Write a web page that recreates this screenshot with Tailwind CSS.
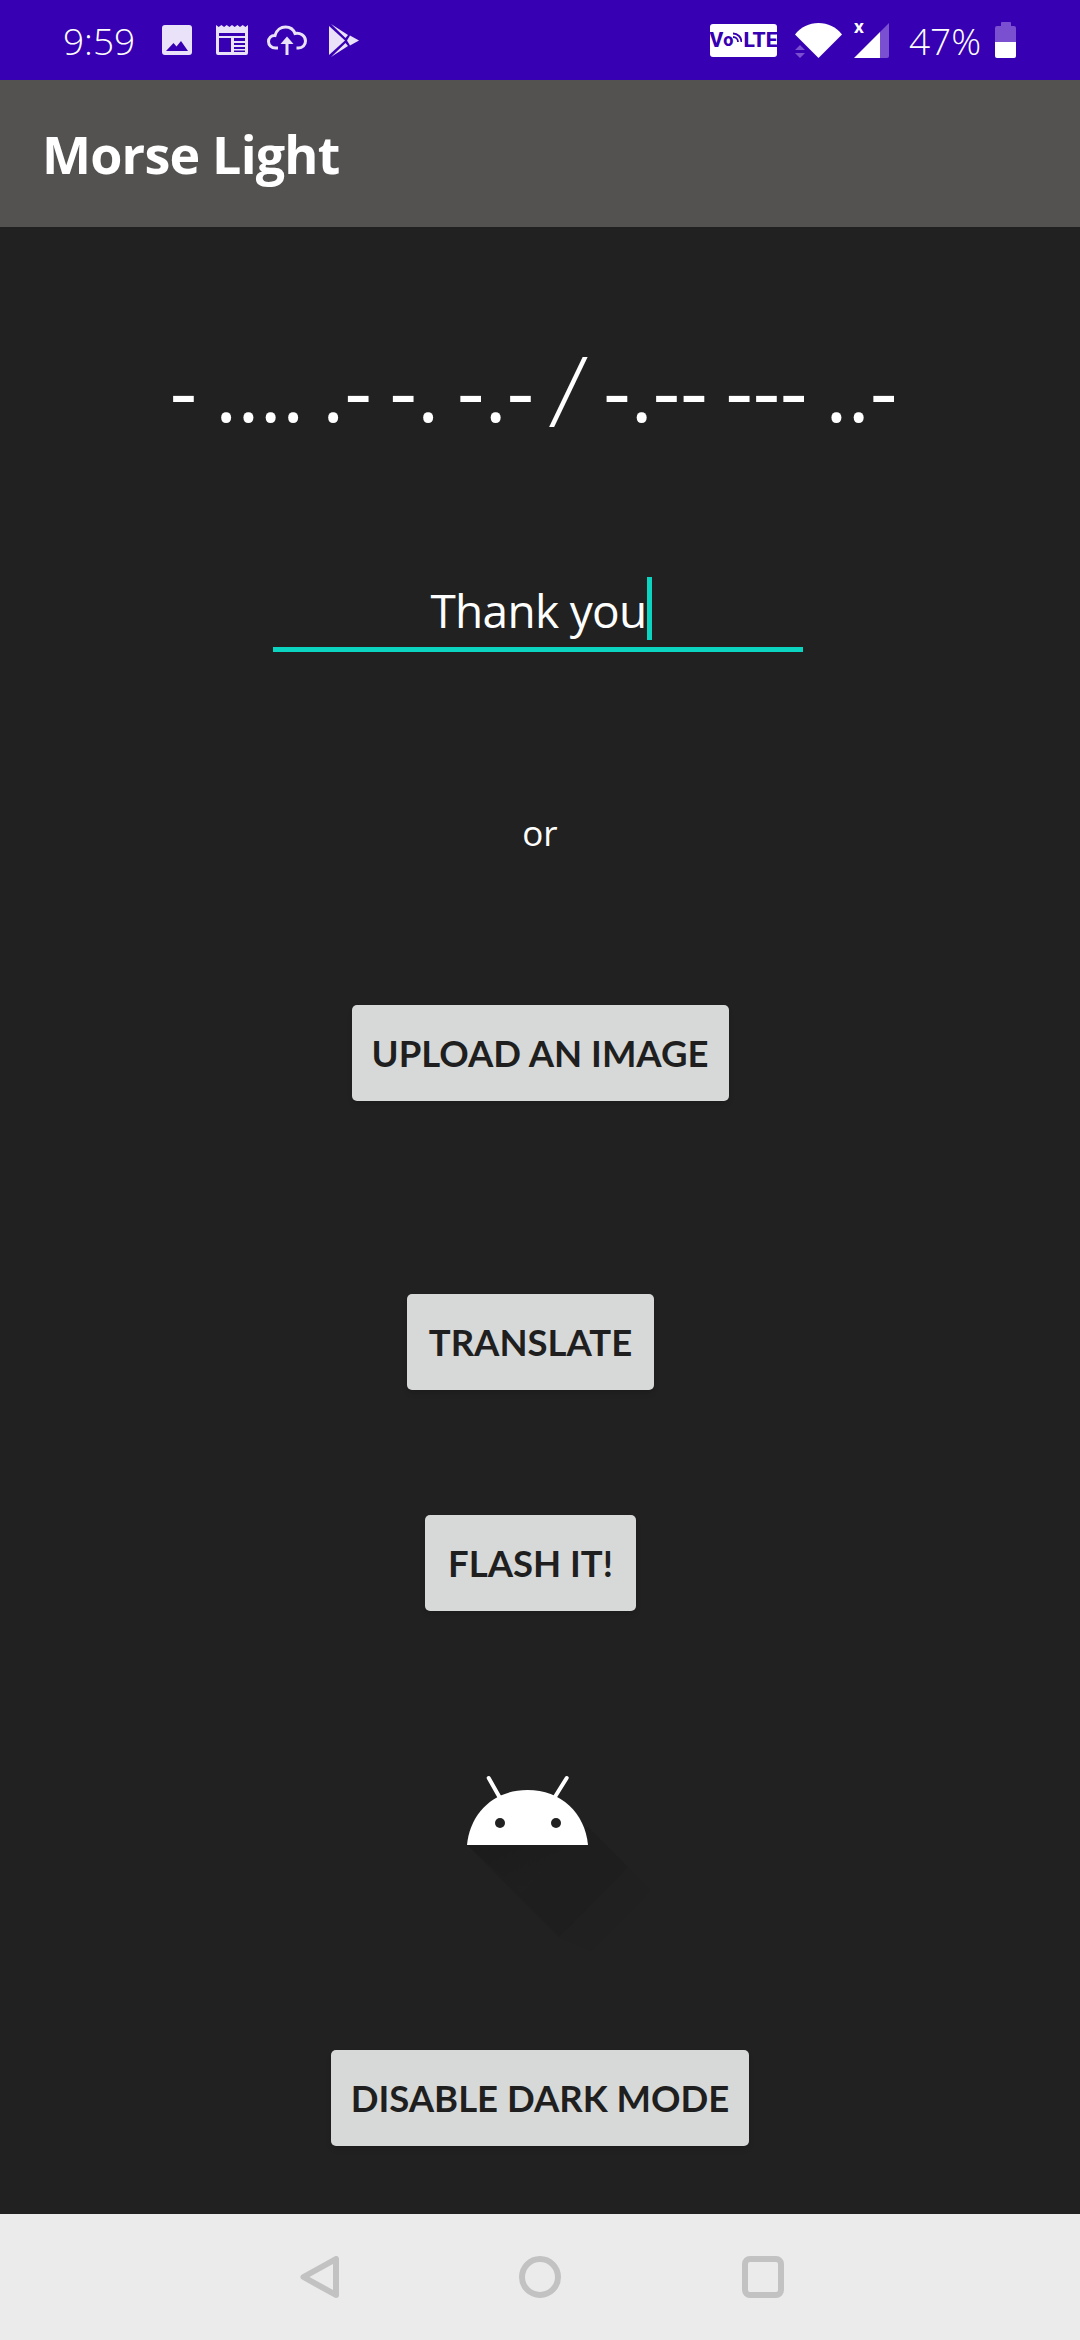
<!doctype html>
<html lang="en">
<head>
    <meta charset="UTF-8">
    <meta name="viewport" content="width=device-width, initial-scale=1.0">
    <title>Morse Light</title>
    <script src="https://cdn.jsdelivr.net/npm/@tailwindcss/browser@4"></script>
</head>
<body class="bg-[#212121] font-['Open_Sans',sans-serif]">
<div class="w-[1080px] h-[2340px] flex flex-col overflow-hidden">

    <!-- status bar -->
    <div class="h-[80px] bg-[#3700b3] flex items-center shrink-0 text-white">
        <span class="ml-[63px] w-[73px] text-[37px] font-light leading-none">9:59</span>
        <div class="ml-[26px] flex items-center text-[#eae2f8]">
            <svg width="30" height="30" viewBox="0 0 30 30" class="fill-current"><path fill-rule="evenodd" d="M3 0h24a3 3 0 0 1 3 3v24a3 3 0 0 1-3 3H3a3 3 0 0 1-3-3V3a3 3 0 0 1 3-3zM4 26h22l-7-10-4.500 5.500-3-3.500z"/></svg>
            <svg width="32" height="30" viewBox="0 0 32 30" class="ml-[24px] fill-current"><path fill-rule="evenodd" d="M0 0l2.700 2 2.700-2 2.700 2 2.600-2 2.700 2 2.600-2 2.700 2 2.700-2 2.600 2 2.700-2 2.700 2L32 0v28a2 2 0 0 1-2 2H2a2 2 0 0 1-2-2zM3 8v3h26V8zM3 13v14h12V13zM18 13v3h11v-3zM18 18v2h11v-2zM18 22v2h11v-2zM18 25.500v1.500h11v-1.500z"/></svg>
            <svg width="40" height="30" viewBox="0 0 40 30" class="ml-[19px]" fill="none" stroke="currentColor" stroke-width="3"><path d="M11 23H8.500C4.500 23 1.500 20 1.500 16.500 1.500 13 4.500 10 8 10.500 9.500 5 14 2 18.500 2c4.500 0 8 2.500 9.500 6.500 5-1 10.500 2 10.500 7.500 0 4-3 7-7 7h-2"/><path d="M20 30V16" /><path d="M13.500 19L20 11.500 26.500 19z" fill="currentColor" stroke="none"/></svg>
            <svg width="30" height="33" viewBox="0 0 30 33" class="ml-[22px] fill-current"><path d="M0 2L16 16.500 0 31z"/><path d="M2 0l17 11-2.500 3z"/><path d="M2 33l14.500-14 2.500 3z"/><path d="M21 11.500L30 16.500 21 21.500 18 16.500z"/></svg>
        </div>
        <div class="ml-auto flex items-center">
            <div class="w-[67px] h-[33px] bg-white rounded-[3px] flex items-center justify-center">
                <span class="flex items-center text-[#3700b3] text-[21px] font-extrabold leading-none font-['Roboto',sans-serif]">V<span class="text-[18px]">o</span>
                    <svg width="9" height="14" viewBox="0 0 9 14" fill="none" stroke="#3700b3" stroke-width="1.800" class="mb-[6px] mr-[1px]"><path d="M0 7a5 5 0 0 1 5 5M0 3.500a8.500 8.500 0 0 1 8.500 8.500"/></svg>LTE</span>
            </div>
            <svg width="47" height="35" viewBox="0 0 47 35" class="ml-[18px]"><path fill="#fff" d="M0 11.500C6 4 14 0 23.500 0S41 4 47 11.500L23.500 35z"/><path fill="#7a4fd0" d="M0 27l5 -5 5 5zM0 30h10l-5 5z"/></svg>
            <div class="relative ml-[12px] w-[35px] h-[36px]">
                <svg width="35" height="36" viewBox="0 0 35 36"><path fill="#7a4fd0" d="M26 10L35 1v33a2 2 0 0 1-2 2h-7z"/><path fill="#fff" d="M0 36L26 10v26z"/></svg>
                <span class="absolute left-0 top-[-4px] text-white text-[17px] font-bold leading-none">x</span>
            </div>
            <span class="ml-[20px] w-[73px] text-[37px] font-light leading-none">47%</span>
            <div class="ml-[13px] mr-[64px] w-[21px] h-[36px] flex flex-col items-center">
                <div class="w-[10px] h-[4px] bg-[#7a4fd0] rounded-t-[1px]"></div>
                <div class="w-full h-[16px] bg-[#7a4fd0] rounded-t-[2px]"></div>
                <div class="w-full h-[16px] bg-white rounded-b-[2px]"></div>
            </div>
        </div>
    </div>

    <!-- app bar -->
    <div class="h-[147px] bg-[#545251] flex items-center pl-[42px] shrink-0">
        <h1 class="text-white text-[52px] font-bold leading-none tracking-[-0.8px]">Morse Light</h1>
    </div>

    <!-- content -->
    <main class="flex-1 flex flex-col items-center">
        <div class="mt-[102px] mr-[13px] h-[120px] flex items-center text-white text-[85px] leading-none whitespace-pre [word-spacing:-4.250px]">- .... .- -. -.- <span class="inline-block -skew-x-6 font-light text-[98px]">/</span> -.-- --- ..-</div>

        <div class="mt-[121px] mr-[4px] w-[530px] h-[82px] pl-[6px] border-b-[5px] border-[#0bd5c0] flex items-center justify-center">
            <span class="text-white text-[46px] leading-none tracking-[-0.7px] pt-[3px]">Thank you</span>
            <span class="w-[5px] h-[63px] bg-[#0bd5c0]"></span>
        </div>

        <p class="mt-[163px] text-white text-[35px] leading-none">or</p>

        <button class="mt-[155px] w-[377px] h-[96px] bg-[#d7d9d8] rounded-[5px] text-[#1f1f1f] text-[36.500px] font-bold font-['Lato',sans-serif] shadow-md">UPLOAD AN IMAGE</button>
        <button class="mt-[193px] mr-[19px] w-[247px] h-[96px] bg-[#d7d9d8] rounded-[5px] text-[#1f1f1f] text-[36.500px] font-bold font-['Lato',sans-serif] shadow-md">TRANSLATE</button>
        <button class="mt-[125px] mr-[19px] w-[211px] h-[96px] bg-[#d7d9d8] rounded-[5px] text-[#1f1f1f] text-[36.500px] font-bold font-['Lato',sans-serif] shadow-md">FLASH IT!</button>

        <!-- android logo with long shadow -->
        <svg width="200" height="176" viewBox="0 0 200 176" class="mt-[164px] ml-[42px] block">
            <defs>
                <linearGradient id="longShadow" x1="0" y1="0" x2="1" y2="1">
                    <stop offset="0" stop-color="#1b1b1b"/>
                    <stop offset="1" stop-color="#202020"/>
                </linearGradient>
            </defs>
            <path fill="#202020" d="M127 52L190 115 130 176 98 162z"/>
            <path fill="#1e1e1e" d="M6 70L98 162 167 92 127 52z"/>
            <path fill="url(#longShadow)" d="M6 70L60 118 110 70z"/>
            <path fill="#fff" d="M6 70C9 38 33 15 66.500 15S124 38 127 70z"/>
            <path stroke="#fff" stroke-width="4" stroke-linecap="round" fill="none" d="M27.700 3L38.300 21.700M105.700 3L94 21.700"/>
            <circle cx="39" cy="48" r="5" fill="#212121"/>
            <circle cx="95" cy="48" r="5" fill="#212121"/>
        </svg>

        <button class="mt-[99px] w-[418px] h-[96px] bg-[#d7d9d8] rounded-[5px] text-[#1f1f1f] text-[36.500px] font-bold font-['Lato',sans-serif] shadow-md">DISABLE DARK MODE</button>
    </main>

    <!-- nav bar -->
    <div class="h-[126px] bg-[#ebebeb] shrink-0 flex items-center justify-center gap-[180px] pl-[4px]">
        <svg width="39" height="42" viewBox="0 0 39 42" fill="none" stroke="#c2c2c2" stroke-width="6" stroke-linejoin="round"><path d="M3.500 21L36 3v36z"/></svg>
        <svg width="42" height="42" viewBox="0 0 42 42" fill="none" stroke="#c2c2c2" stroke-width="6"><circle cx="21" cy="21" r="18"/></svg>
        <svg width="42" height="42" viewBox="0 0 42 42" fill="none" stroke="#c2c2c2" stroke-width="6" class="ml-[1px]"><rect x="3" y="3" width="36" height="36" rx="5"/></svg>
    </div>
</div>
</body>
</html>
